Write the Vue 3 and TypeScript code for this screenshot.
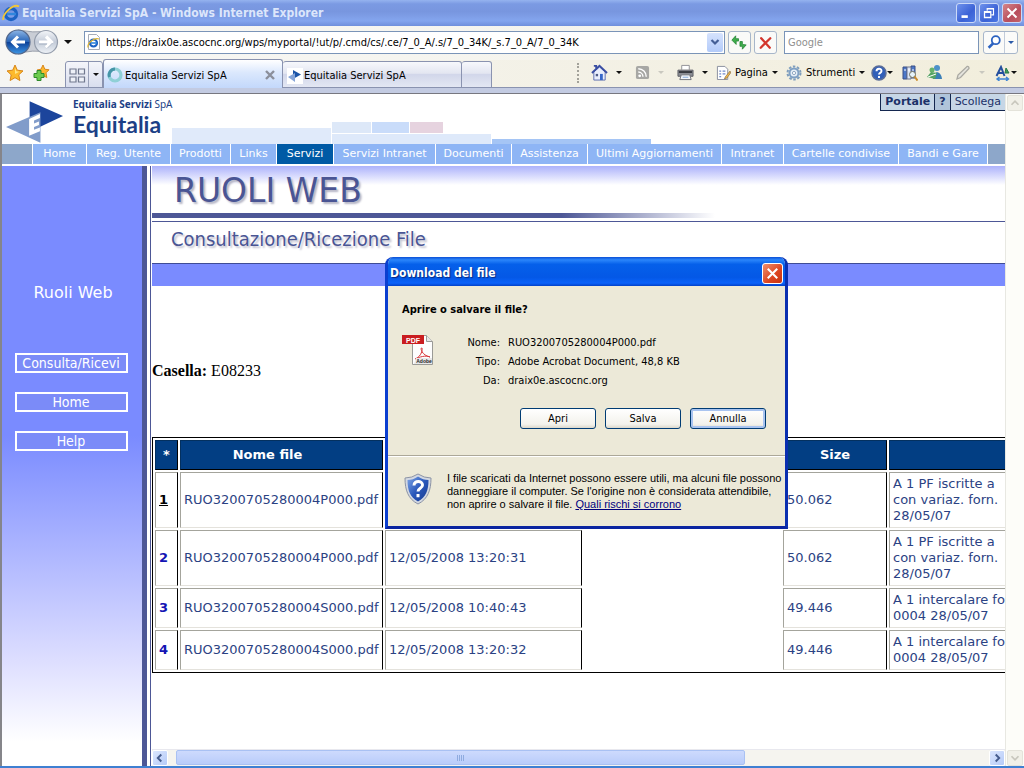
<script setup lang="ts">
import { ref } from 'vue'

interface NavItem { label: string; active?: boolean }
interface FileRow { name: string; date: string; size: string; note: string[] }

const address = ref('https://draix0e.ascocnc.org/wps/myportal/!ut/p/.cmd/cs/.ce/7_0_A/.s/7_0_34K/_s.7_0_A/7_0_34K')
const query = ref('')

const nav: NavItem[] = [
  { label: 'Home' },
  { label: 'Reg. Utente' },
  { label: 'Prodotti' },
  { label: 'Links' },
  { label: 'Servizi', active: true },
  { label: 'Servizi Intranet' },
  { label: 'Documenti' },
  { label: 'Assistenza' },
  { label: 'Ultimi Aggiornamenti' },
  { label: 'Intranet' },
  { label: 'Cartelle condivise' },
  { label: 'Bandi e Gare' },
]

const menu: string[] = ['Consulta/Ricevi', 'Home', 'Help']

const rows: FileRow[] = [
  { name: 'RUO3200705280004P000.pdf', date: '', size: '50.062', note: ['A 1 PF iscritte a', 'con variaz. forn.', '28/05/07'] },
  { name: 'RUO3200705280004P000.pdf', date: '12/05/2008 13:20:31', size: '50.062', note: ['A 1 PF iscritte a', 'con variaz. forn.', '28/05/07'] },
  { name: 'RUO3200705280004S000.pdf', date: '12/05/2008 10:40:43', size: '49.446', note: ['A 1 intercalare fo', '0004 28/05/07'] },
  { name: 'RUO3200705280004S000.pdf', date: '12/05/2008 13:20:32', size: '49.446', note: ['A 1 intercalare fo', '0004 28/05/07'] },
]
</script>

<template>
  <div class="window">
    <header class="titlebar">
      <svg class="i18" viewBox="0 0 18 18">
        <circle cx="9" cy="10" r="5.5" fill="none" stroke="#1c62c4" stroke-width="3.4" />
        <path d="M5 10h9" stroke="#2f86dd" stroke-width="2.4" />
        <path d="M1.500 16C-.5 11 11 -1 17 2.500" fill="none" stroke="#f0c63a" stroke-width="1.800" />
      </svg>
      <span class="caption">Equitalia Servizi SpA - Windows Internet Explorer</span>
      <div class="winbtns">
        <button class="wb" aria-label="Riduci a icona"><svg viewBox="0 0 20 20"><path d="M5 14h7" stroke="#fff" stroke-width="3" /></svg></button>
        <button class="wb" aria-label="Ripristina"><svg viewBox="0 0 20 20"><path d="M8 7.500V5h7v7h-2.500M8 5.500h7" fill="none" stroke="#fff" stroke-width="1.300" /><path d="M5 8.500h7V15H5zM5 9.300h7" fill="none" stroke="#fff" stroke-width="1.400" /></svg></button>
        <button class="wb close" aria-label="Chiudi"><svg viewBox="0 0 20 20"><path d="M5 5l10 10M15 5L5 15" stroke="#fff" stroke-width="2.200" /></svg></button>
      </div>
    </header>

    <div class="addressrow">
      <div class="navbtns">
        <svg class="plate" viewBox="0 0 56 28">
          <defs>
            <linearGradient id="bk" x1="0" y1="0" x2="0" y2="1"><stop offset="0" stop-color="#8db6e6" /><stop offset=".48" stop-color="#2a66b8" /><stop offset=".5" stop-color="#0c3f96" /><stop offset="1" stop-color="#3e97e6" /></linearGradient>
            <linearGradient id="fw" x1="0" y1="0" x2="0" y2="1"><stop offset="0" stop-color="#f4f6f9" /><stop offset=".5" stop-color="#c3cbd8" /><stop offset="1" stop-color="#eef2f7" /></linearGradient>
          </defs>
          <path d="M14 2Q29 5 43 3.500V24.500Q29 21 14 26Z" fill="#c9cdd5" stroke="#9aa0ac" />
          <circle cx="14" cy="14" r="12" fill="url(#bk)" stroke="#54688c" stroke-width="1.200" />
          <path d="M21 14H9M14 8.500L8.500 14L14 19.500" fill="none" stroke="#fff" stroke-width="3" />
          <circle cx="42" cy="14" r="11.500" fill="url(#fw)" stroke="#939cab" stroke-width="1.200" />
          <path d="M35 14h12M42 8.500L47.500 14L42 19.500" fill="none" stroke="#fff" stroke-width="3.200" />
          <path d="M35 16h8M43 20.500l5.500-5.500" fill="none" stroke="#98a4b8" stroke-width=".8" />
        </svg>
        <button class="ghost" aria-label="Indietro"></button>
        <button class="ghost" aria-label="Avanti"></button>
      </div>
      <button class="bare recent" aria-label="Pagine recenti"><i class="caret big"></i></button>
      <div class="addr">
        <svg class="i16" viewBox="0 0 16 16">
          <path d="M2.500.5h8l3 3v12h-11z" fill="#fff" stroke="#a6acb8" />
          <circle cx="7.500" cy="9" r="3.500" fill="none" stroke="#1c62c4" stroke-width="2.200" />
          <path d="M5 9h6" stroke="#2f86dd" stroke-width="1.600" /><path d="M2 13.500C1 9 9 3 13 5" fill="none" stroke="#e0b52f" stroke-width="1.200" />
        </svg>
        <input v-model="address" aria-label="Indirizzo" />
        <button class="combo" aria-label="Mostra indirizzi"><svg viewBox="0 0 16 18"><path d="M4.500 7l3.500 3.500L11.500 7" fill="none" stroke="#445f96" stroke-width="2.200" /></svg></button>
      </div>
      <button class="sq" aria-label="Aggiorna"><svg viewBox="0 0 22 22"><path d="M3 8.500L7 4v3h3v2.500H7.500V13z" fill="#3fae4b" stroke="#238235" stroke-width=".8" /><path d="M19 12.500L15 17v-3h-2.500v-5H15v3z" fill="#3fae4b" stroke="#238235" stroke-width=".8" transform="translate(-1 1)" /></svg></button>
      <button class="sq" aria-label="Interrompi"><svg viewBox="0 0 22 22"><path d="M6.500 6.500l9 10M16 6.500L6 16.500" stroke="#d3362d" stroke-width="2.400" stroke-linecap="round" /></svg></button>
      <input v-model="query" class="search" placeholder="Google" aria-label="Cerca" />
      <div class="searchbtns">
        <button class="bare" aria-label="Avvia ricerca"><svg class="i16" viewBox="0 0 18 18"><circle cx="11" cy="7" r="4.500" fill="#fff" stroke="#2b62c0" stroke-width="2" /><path d="M8 10.500L3 15.500" stroke="#2b62c0" stroke-width="3" /></svg></button>
        <button class="bare split" aria-label="Opzioni di ricerca"><i class="caret blue"></i></button>
      </div>
    </div>

    <div class="tabrow">
      <button class="bare star" aria-label="Preferiti"><svg class="i18" viewBox="0 0 18 18"><path d="M9 1l2.300 5.200 5.700.7-4.200 3.900 1.100 5.700L9 13.700 4.100 16.500l1.100-5.700L1 6.900l5.700-.7z" fill="#fdb92c" stroke="#d8861a" /><path d="M9 4l1.300 3.200 3 .5L9 10z" fill="#ffe68a" /></svg></button>
      <button class="bare star" aria-label="Aggiungi a preferiti"><svg class="i18" viewBox="0 0 18 18"><path d="M11 1l1.800 4.200 4.200.6-3 3 .8 4.700L11 11.500 7 13.500 7.800 9 5 6l4-.8z" fill="#fdb92c" stroke="#d8861a" /><path d="M5 6.500h4v3h3v4H9v3H5v-3H2v-4h3z" fill="#6ccb4e" stroke="#2f8a2c" /></svg></button>
      <div class="quick">
        <button class="bare" aria-label="Schede rapide"><svg class="i18" viewBox="0 0 18 18"><path d="M2 3h6v5H2zM10.500 3h6v5h-6zM2 11h6v5H2zM10.500 11h6v5h-6z" fill="#eef1f8" stroke="#70788e" stroke-width="1.200" /></svg></button>
        <button class="bare split" aria-label="Elenco schede"><i class="caret"></i></button>
      </div>
      <div class="tab current">
        <svg class="i16" viewBox="0 0 16 16"><circle cx="8" cy="8" r="6" fill="none" stroke="#8fd0d6" stroke-width="3.200" /><path d="M8 2a6 6 0 0 0-5.500 8" fill="none" stroke="#4595a8" stroke-width="3" /></svg>
        <a href="#">Equitalia Servizi SpA</a>
        <button class="bare tabclose" aria-label="Chiudi scheda"><svg class="i12" viewBox="0 0 12 12"><path d="M2 2l8 8M10 2l-8 8" stroke="#8b8f9b" stroke-width="2.400" /></svg></button>
      </div>
      <div class="tab">
        <svg class="i16" viewBox="0 0 16 16"><path fill="#fff" d="M0 0h16v16H0z" /><path d="M6 2l8 4.500L6 11z" fill="#1c55a8" /><path d="M1 9l7-4v9z" fill="#86a5d8" /></svg>
        <a href="#">Equitalia Servizi SpA</a>
      </div>
      <button class="newtab" aria-label="Nuova scheda"></button>
      <div class="commands">
        <span class="grip"></span>
        <button class="cmd wide" aria-label="Pagina iniziale"><svg class="i17" viewBox="0 0 18 18"><path d="M3 8.500V17h12V8.500L9 3z" fill="#e9eefc" stroke="#5a6cae" /><path d="M1 9.500L9 2l8 7.500M3 2h2.500v4" fill="none" stroke="#3a4ea3" stroke-width="2" /><path d="M9.500 10.500h3V17h-3z" fill="#3767c9" /><path d="M5 10.500h2.500V13H5z" fill="#4e5c88" /></svg><i class="caret"></i></button>
        <button class="cmd wide" aria-label="Feed"><svg class="i15" viewBox="0 0 16 16"><rect x="1" y="1" width="14" height="14" rx="2" fill="#a7a7a4" /><circle cx="5" cy="11.500" r="1.500" fill="#fff" /><path d="M3.500 7.500a5 5 0 0 1 5 5M3.500 4a8.500 8.500 0 0 1 8.500 8.500" fill="none" stroke="#fff" stroke-width="1.500" /></svg><i class="caret off"></i></button>
        <button class="cmd wide" aria-label="Stampa"><svg class="i17" viewBox="0 0 18 18"><path d="M5 6V1.500h8V6" fill="#fff" stroke="#8e8f94" /><path d="M1 6.500h16V13H1z" fill="#8a8c93" stroke="#5d5f66" /><path d="M2 8.500h14" stroke="#35373d" stroke-width="2" /><path d="M4.500 11.500h9l1.500 5H3z" fill="#f5f7fb" stroke="#6f7178" /><path d="M6 14h6" stroke="#80a6da" /></svg><i class="caret"></i></button>
        <button class="cmd"><svg class="i15" viewBox="0 0 16 16"><path d="M1.500 1.500h8l3 3v11h-11z" fill="#fff" stroke="#868c9c" /><path d="M3.500 6.500h2M3.500 9.500h2M3.500 12.500h2M7 6.500h3M7 9.500h3" stroke="#3f62b8" /><path d="M15 6.500l-5 6-1 2.500 2.500-1 4-5.500z" fill="#f5b94a" stroke="#8d7143" stroke-width=".8" /></svg>Pagina<i class="caret near"></i></button>
        <button class="cmd"><svg class="i16" viewBox="0 0 16 16"><circle cx="8" cy="8" r="6.500" fill="none" stroke="#7e9dbd" stroke-width="2" stroke-dasharray="2.500 1.600" /><circle cx="8" cy="8" r="4.500" fill="#e6eff8" stroke="#7fa0c4" stroke-width="2" /><circle cx="8" cy="8" r="1.600" fill="#fff" stroke="#7894b4" stroke-width=".8" /></svg>Strumenti<i class="caret near"></i></button>
        <button class="cmd tight" aria-label="Guida"><svg class="i16" viewBox="0 0 16 16"><circle cx="8" cy="8" r="7" fill="#315fb9" stroke="#5b6d97" stroke-width="1.500" /><path d="M5.500 6.300c0-3.300 5-3.300 5-.3 0 2-2.500 1.700-2.500 3.600M8 11v2" fill="none" stroke="#fff" stroke-width="1.900" /></svg><i class="caret"></i></button>
        <button class="cmd" aria-label="Ricerche"><svg class="i16" viewBox="0 0 16 16"><path d="M1 2h4v12H1zM9 1h4v12H9z" fill="#4c78c9" stroke="#3b4f84" /><path d="M5 2h4v12H5z" fill="#dce5f5" stroke="#69738f" /><path d="M2 5h2M6 5h2M10 5h2" stroke="#fff" /><circle cx="10.500" cy="9.500" r="3" fill="#e5f3fb" stroke="#77755e" /><path d="M12.500 11.500l3 4" stroke="#c98a2b" stroke-width="2" /></svg></button>
        <button class="cmd" aria-label="Messenger"><svg class="i17" viewBox="0 0 17 17"><circle cx="11" cy="4" r="3" fill="#4d91c9" /><path d="M7 15c0-9 8-9 9 0z" fill="#3b7fb7" /><circle cx="6" cy="6" r="2.500" fill="#66b26b" /><path d="M1 13l4-5 6 1-2 6z" fill="#55a463" /><path d="M2 13l8-3" stroke="#fff" /></svg></button>
        <button class="cmd wide" aria-label="Modifica"><svg class="i16" viewBox="0 0 16 16"><path d="M2 14l1-4L12 1.500q2-.5 2 2L5.500 12.500z" fill="#e4e3dc" stroke="#aaa9a2" stroke-width="1.300" /></svg><i class="caret off"></i></button>
        <button class="cmd tight" aria-label="Traduci"><svg class="i16" viewBox="0 0 16 16"><path d="M1.500 11L6 2l3.500 9M3.500 8h5" fill="none" stroke="#244f9e" stroke-width="2" /><path d="M11 3l3 5h-4z" fill="#3f9e5b" stroke="#28784a" /><path d="M2 14h11M4.500 12L2 14l2.500 2M11 12l2.500 2L11 16" fill="none" stroke="#3e84d4" stroke-width="1.400" /></svg><i class="caret"></i></button>
      </div>
    </div>

    <div class="viewport">
      <main class="page">
        <div class="masthead">
          <div class="brand">
            <svg class="logo" viewBox="0 0 60 46">
              <path d="M24 3v31L58 18z" fill="#1c459c" />
              <path d="M0 29L35 14V45z" fill="#819cca" />
              <path d="M23.500 21l11-5v4l-6 2.500v3l5-2V27l-5 2v3l6-2.500v4l-11 4.500z" fill="#fff" />
            </svg>
            <div class="names">
              <div class="small"><b>Equitalia Servizi</b> SpA</div>
              <div class="large">Equitalia</div>
            </div>
          </div>
          <div class="steps">
            <span class="s1"></span>
            <div class="s2"><div class="chips"><span></span><span></span><span></span></div><span class="base"></span></div>
            <span class="s3"></span>
          </div>
          <div class="portal">
            <a href="#"><b>Portale</b></a><a href="#" class="q"><b>?</b></a><a href="#">Scollega</a>
          </div>
        </div>
        <nav class="nav">
          <span class="end"></span>
          <a v-for="n in nav" :key="n.label" href="#" :class="{ active: n.active }">{{ n.label }}</a>
          <span class="end"></span>
        </nav>
        <div class="body">
          <aside class="side">
            <div class="sidetitle">Ruoli Web</div>
            <button v-for="m in menu" :key="m">{{ m }}</button>
          </aside>
          <section class="content">
            <h1>RUOLI WEB</h1>
            <div class="rule"></div>
            <h2>Consultazione/Ricezione File</h2>
            <div class="band"></div>
            <p class="casella"><b>Casella:</b> E08233</p>
            <table>
              <colgroup><col class="c1" /><col class="c2" /><col class="c3" /><col class="c4" /><col class="c5" /><col class="c6" /></colgroup>
              <thead>
                <tr><th>*</th><th class="file">Nome file</th><th></th><th></th><th>Size</th><th></th></tr>
              </thead>
              <tbody>
                <tr v-for="(r, i) in rows" :key="i">
                  <td class="num"><a href="#" :class="{ focused: i === 0 }">{{ i + 1 }}</a></td>
                  <td>{{ r.name }}</td>
                  <td>{{ r.date }}</td>
                  <td class="void"></td>
                  <td>{{ r.size }}</td>
                  <td><div v-for="l in r.note" :key="l">{{ l }}</div></td>
                </tr>
              </tbody>
            </table>
            <div class="hscroll">
              <button class="sb" aria-label="Scorri a sinistra"><svg viewBox="0 0 16 16"><path d="M9.500 4L5.500 8l4 4" fill="none" stroke="#465c8d" stroke-width="2.200" /></svg></button>
              <div class="track"><div class="thumb"><i></i><i></i><i></i><i></i></div></div>
              <button class="sb" aria-label="Scorri a destra"><svg viewBox="0 0 16 16"><path d="M6.500 4l4 4-4 4" fill="none" stroke="#465c8d" stroke-width="2.200" /></svg></button>
            </div>
          </section>
        </div>
      </main>
      <div class="vscroll">
        <button class="sb off" aria-label="Scorri in alto" disabled><svg viewBox="0 0 16 16"><path d="M4 10l4-4 4 4" fill="none" stroke="#c8c7bd" stroke-width="2" /></svg></button>
        <button class="sb off" aria-label="Scorri in basso" disabled><svg viewBox="0 0 16 16"><path d="M4 6l4 4 4-4" fill="none" stroke="#c8c7bd" stroke-width="2" /></svg></button>
      </div>
    </div>

    <div class="dialog" role="dialog" aria-labelledby="dlg">
      <div class="dtitle">
        <span id="dlg">Download del file</span>
        <button class="dx" aria-label="Chiudi finestra"><svg viewBox="0 0 20 20"><path d="M5 5l10 10M15 5L5 15" stroke="#fff" stroke-width="2.200" /></svg></button>
      </div>
      <div class="dmain">
        <b>Aprire o salvare il file?</b>
        <div class="info">
          <svg class="pdf" viewBox="0 0 32 32">
            <path d="M10.500 2.500h14l6 6V31.500h-20z" fill="#fdfdfd" stroke="#9a9a96" />
            <path d="M24.500 2.500v6h6" fill="#e6e6e6" stroke="#9a9a96" />
            <path d="M0 2h22v9H0z" fill="#c91d20" />
            <text x="11" y="9.500" text-anchor="middle" font-size="7" font-weight="bold" fill="#fff">PDF</text>
            <path d="M13 26c4-1 8-7 7-11-2-1-1 7 8 9-4-2-11 0-15 2z" fill="none" stroke="#d8373a" />
            <path d="M14 25h16v6H12z" fill="#e8e8e8" />
            <text x="22" y="30" text-anchor="middle" font-size="5" font-weight="bold" fill="#222">Adobe</text>
          </svg>
          <dl>
            <dt>Nome:</dt><dd>RUO3200705280004P000.pdf</dd>
            <dt>Tipo:</dt><dd>Adobe Acrobat Document, 48,8 KB</dd>
            <dt>Da:</dt><dd>draix0e.ascocnc.org</dd>
          </dl>
        </div>
        <div class="actions">
          <button>Apri</button><button>Salva</button><button class="default">Annulla</button>
        </div>
      </div>
      <div class="dfoot">
        <svg class="shield" viewBox="0 0 28 32">
          <defs><linearGradient id="sh" x1="0" y1="0" x2="1" y2="1"><stop offset="0" stop-color="#7fa6e6" /><stop offset=".5" stop-color="#2a58bb" /><stop offset="1" stop-color="#173a8e" /></linearGradient></defs>
          <path d="M14 1Q20 5 27 5C27 17 24 26 14 31C4 26 1 17 1 5Q8 5 14 1z" fill="#d3d8e2" stroke="#8b93a5" />
          <path d="M14 3.500Q19 7 24.500 7C24.500 17 22 24.500 14 28.500C6 24.500 3.500 17 3.500 7Q9 7 14 3.500z" fill="url(#sh)" />
          <path d="M10 12.500c0-5.500 8.500-5 8.500-.5 0 3.500-4.500 3-4.500 6.500M14 21v3.200" fill="none" stroke="#fff" stroke-width="3" />
        </svg>
        <div class="warn">
          <div>I file scaricati da Internet possono essere utili, ma alcuni file possono</div>
          <div>danneggiare il computer. Se l'origine non è considerata attendibile,</div>
          <div><span>non aprire o salvare il file. </span><a href="#">Quali rischi si corrono</a></div>
        </div>
      </div>
    </div>
  </div>
</template>

<style>
body { margin: 0; }
</style>

<style scoped>
* { box-sizing: border-box; }
button, input { font: inherit; color: inherit; margin: 0; padding: 0; }
a { color: inherit; text-decoration: none; }
svg { display: block; flex: none; }
.window {
  position: relative; display: flex; flex-direction: column; height: 100vh; min-height: 690px; overflow: hidden;
  font: 11px/13px "DejaVu Sans Condensed", "Noto Sans", sans-serif; color: #000; background: #f2efe2;
  border-bottom: 2px solid #3f80d2;
}
.i12 { width: 12px; height: 12px; } .i15 { width: 15px; height: 15px; } .i16 { width: 16px; height: 16px; }
.i17 { width: 17px; height: 17px; } .i18 { width: 18px; height: 18px; }
.caret { width: 0; height: 0; border: 3px solid transparent; border-top-color: #111; border-bottom: 0; flex: none; }
.caret.big { border-width: 4px; border-bottom: 0; }
.caret.blue { border-top-color: #2b5aa8; }
.caret.off { border-top-color: #c9c8bf; }
.bare { border: 0; background: none; display: flex; align-items: center; justify-content: center; }

.titlebar {
  height: 26px; flex: none; display: flex; align-items: center; gap: 2px; padding: 0 2px;
  background: linear-gradient(#95b3ef, #7b9ae3 15%, #7896df 45%, #84a5ee 80%, #6f8fdc);
  color: #dce6fb; font-weight: bold;
}
.caption { flex: 1; white-space: nowrap; font-size: 12px; }
.winbtns { display: flex; gap: 3px; }
.wb { width: 20px; height: 20px; border: 1px solid #cbd9f8; border-radius: 3px; background: linear-gradient(135deg, #6f92ec, #3b62d6 60%, #4c78e4); }
.wb.close { background: linear-gradient(135deg, #d6868a, #b84d5c 60%, #c4656a); }

.addressrow { height: 34px; flex: none; display: flex; align-items: center; padding: 0 6px 2px 4px; background: linear-gradient(90deg, #f7f7f5, #f4f2e8); }
.navbtns { position: relative; display: flex; width: 56px; height: 28px; }
.plate { position: absolute; inset: 0; }
.ghost { position: relative; flex: 1; border: 0; background: none; border-radius: 14px; }
.recent { width: 24px; height: 22px; padding-right: 8px; }
.addr { flex: 1; height: 23px; display: flex; align-items: center; gap: 4px; padding: 1px; border: 1px solid #7a94b8; background: #fff; }
.addr input { flex: 1; min-width: 0; border: 0; outline: 0; background: none; }
.combo { width: 16px; height: 19px; border: 0; border-radius: 2px; background: linear-gradient(#d5e2fd, #b3cbfa); }
.sq { width: 23px; height: 23px; margin-left: 3px; border: 1px solid #a7b6ca; border-radius: 3px; background: #fafaf8; }
.search { width: 195px; height: 23px; margin: 0 4px 0 7px; padding: 0 3px; border: 1px solid #7a94b8; background: #fff; outline: 0; }
.search::placeholder { color: #8f8f8f; opacity: 1; }
.searchbtns { width: 35px; height: 23px; display: flex; border: 1px solid #a7b6ca; border-radius: 3px; background: #fbfbf9; }
.searchbtns .bare:first-child { flex: 1; }
.searchbtns .split { width: 13px; border-left: 1px solid #c2ccda; }

.tabrow { height: 34px; flex: none; display: flex; align-items: flex-end; padding: 0 6px 5px 2px; background: linear-gradient(90deg, #f5f5f3, #f2eedc); border-bottom: 1px solid #777780; box-shadow: inset 0 -5px #c3cbe2, inset 0 -6px #8a93b0; }
.star { width: 26px; height: 30px; }
.quick { display: flex; width: 38px; height: 27px; margin-left: 11px; border: 1px solid #8a93b0; border-radius: 3px 3px 0 0; background: linear-gradient(#f4f5fa, #d9deee); }
.quick .bare:first-child { flex: 1; }
.quick .split { width: 14px; border-left: 1px solid #9aa2ba; }
.tab { display: flex; align-items: center; gap: 1px; width: 179px; height: 27px; padding: 2px 4px 0; border: 1px solid #8a93b0; border-left: 0; border-radius: 3px 3px 0 0; background: linear-gradient(#f7f8fc, #e3e6f1 45%, #d2d7ea 50%, #e3e7f3); white-space: nowrap; }
.tab a { flex: 1; }
.current { width: 180px; height: 29px; padding-left: 3px; padding-right: 6px; gap: 2px; border-left: 1px solid #8a93b0; border-bottom: 0; background: linear-gradient(#fff, #dbe8fd 45%, #c3d8fb); }
.newtab { width: 30px; height: 27px; border: 1px solid #8a93b0; border-left: 0; border-radius: 3px 3px 0 0; background: linear-gradient(#f7f8fc, #e3e6f1 45%, #d2d7ea 50%, #e3e7f3); }
.commands { margin-left: auto; height: 31px; display: grid; align-items: center; grid-template-columns: 14px 44px 42px 39px 70px 85px 31px 24px 29px 40px 23px; }
.grip { height: 20px; border-left: 2px dotted #a3a29a; }
.cmd { display: flex; align-items: center; gap: 4px; border: 0; background: none; white-space: nowrap; height: 24px; }
.cmd.wide { gap: 8px; }
.cmd.tight { gap: 0; }

.viewport { flex: 1; min-height: 0; display: flex; background: #fff; border-left: 2px solid #85858a; }
.page { flex: 1; min-width: 0; display: flex; flex-direction: column; }
.masthead { position: relative; height: 50px; flex: none; display: flex; }
.brand { display: flex; width: 170px; padding: 4px 0 0 4px; gap: 8px; color: #1c3f86; white-space: nowrap; flex: none; }
.logo { width: 59px; height: 46px; }
.small { font: 10px/12px "Noto Sans", sans-serif; }
.large { font: bold 23px/28px Lato, "Noto Sans", sans-serif; }
.steps { display: flex; align-items: flex-end; }
.s1 { width: 159px; height: 16px; background: #e0eafa; }
.s2 { width: 159px; margin-left: 1px; }
.chips { display: flex; gap: 1px; margin-bottom: 1px; }
.chips span { width: 39px; height: 11px; background: #dde8f8; }
.chips span:nth-child(2) { width: 37px; background: #c9dcfa; }
.chips span:nth-child(3) { width: 33px; background: #e6d3df; }
.base { display: block; height: 10px; background: #dee9fa; }
.s3 { width: 159px; height: 5px; margin-left: 1px; background: #a5c5f5; }
.portal { position: absolute; top: 0; right: 0; display: flex; font: 11px/16px "DejaVu Sans", sans-serif; color: #1b3068; }
.portal a { background: #c6d6e6; border-left: 1px solid #14274f; border-bottom: 1px solid #14274f; padding: 0 4px; }
.portal .q { background: #b0c4da; }
.nav { height: 20px; flex: none; display: grid; gap: 1px; grid-template-columns: 30fr 53fr 83fr 59fr 45fr 56fr 101fr 75fr 75fr 133fr 61fr 114fr 88fr 17fr; font: 11px/20px "DejaVu Sans", sans-serif; color: #fff; text-align: center; }
.nav > * { background: #8eb5f5; min-width: 0; white-space: nowrap; }
.nav .end { background: #8da7ca; }
.nav .active { background: #005aa5; }
.body { flex: 1; min-height: 0; display: flex; margin-top: 2px; }
.side { width: 145px; flex: none; display: flex; flex-direction: column; align-items: center; padding: 117px 2px 0 0; border-right: 5px solid #4d5796; background: linear-gradient(#7a8bff 45%, #dcddff 82%, #fff 96%); color: #fff; }
.sidetitle { font: 16px/20px "DejaVu Sans", sans-serif; margin-bottom: 50px; padding-left: 4px; }
.side button { width: 113px; height: 20px; margin-bottom: 19px; border: 2px solid #fff; background: #7b8bf8; font-size: 14px; line-height: 15px; }
.content { flex: 1; min-width: 0; display: flex; flex-direction: column; overflow: hidden; margin-left: 3px; border-left: 1px solid #4d5796; padding-left: 1px; }
h1, h2 { margin: 0; font-weight: normal; white-space: nowrap; color: #4a5594; }
h1 { height: 47px; flex: none; padding-left: 22px; font: 33px/49px "DejaVu Sans", sans-serif; text-shadow: 2px 2px 2px #b4b4c4; background: linear-gradient(#acb2fb, #fff 19px); }
.rule { height: 9px; flex: none; border-bottom: 1px solid #4d5796; background: linear-gradient(90deg, #4d5796 48%, #fff 66%) 0 0 / 100% 5px no-repeat; }
h2 { height: 41px; flex: none; padding-left: 19px; font-size: 20px; line-height: 35px; text-shadow: 2px 2px 2px #c2c2d0; }
.band { height: 23px; flex: none; background: #7a8bff; border-top: 1px solid #3f4c96; }
.casella { margin: 75px 0 56px; font: 16px/20px "Liberation Serif", serif; }
table { width: 1050px; flex: none; table-layout: fixed; border-collapse: separate; border-spacing: 2px; border: 1px solid #000; font: 13px/16px "DejaVu Sans", sans-serif; color: #2b4283; }
.c1 { width: 23px; } .c2 { width: 203px; } .c3 { width: 197px; } .c4 { width: 197px; } .c5 { width: 104px; }
th { height: 30px; padding: 0; background: #023e83; border: 1px solid #03305f; border-right-color: #000; border-bottom-color: #000; color: #fff; }
th.file { padding-right: 28px; }
td { height: 40px; padding: 3px; border: 1px solid #a4a49c; border-right-color: #000; border-bottom-color: #e4e2dc; white-space: nowrap; }
td.void { border: 0; }
.num { font-weight: bold; color: #1414b4; }
.focused { color: #000; text-decoration: underline; }
.hscroll { margin-top: auto; height: 17px; flex: none; display: flex; background: #f5f4ef; border-top: 1px solid #e8e8ee; }
.sb { width: 16px; height: 16px; border: 1px solid #fff; border-radius: 2px; background: linear-gradient(135deg, #dbe6fe, #b6cbf8); flex: none; }
.sb.off { background: #f1f0e8; border-color: #e4e3da; }
.track { flex: 1; display: flex; padding-left: 8px; }
.thumb { width: 70%; height: 15px; display: flex; justify-content: center; align-items: center; gap: 1px; border: 1px solid #a9c1f3; border-radius: 2px; background: linear-gradient(#cddafd, #b9ccfa); }
.thumb i { width: 1px; height: 6px; background: #8fabdf; }
.vscroll { width: 19px; flex: none; display: flex; flex-direction: column; justify-content: space-between; padding: 1px 0 0 1px; border-left: 1px solid #e8e8e2; background: #fdfdf9; }

.dialog { position: absolute; left: 385px; top: 257px; width: 403px; border: 3px solid #0b3fd0; border-top: 0; border-right-color: #0a2fb0; border-bottom-color: #0a24a0; border-radius: 8px 8px 0 0; background: #ece9d8; overflow: hidden; }
.dtitle { height: 29px; display: flex; align-items: center; justify-content: space-between; padding: 3px 2px 0 2px; background: linear-gradient(#0b4fd6, #2b86fb 10%, #0560ea 25%, #0458e6 70%, #0a62fa 90%, #0241c8); color: #fff; font-weight: bold; font-size: 12px; text-shadow: 1px 1px 1px #0a2a80; }
.dx { width: 21px; height: 21px; border: 1px solid #fff; border-radius: 3px; background: linear-gradient(135deg, #f0906e, #dc4420 60%, #c83410); }
.dmain { padding: 17px 19px 26px 14px; border-bottom: 1px solid #aca899; box-shadow: 0 1px #fff; }
.dmain > b { display: block; }
.info { display: flex; margin-top: 17px; }
.pdf { width: 32px; height: 32px; font-family: "Liberation Sans", sans-serif; }
dl { margin: 0; flex: 1; display: grid; grid-template-columns: 66px 1fr; column-gap: 8px; line-height: 19px; }
dt { text-align: right; } dd { margin: 0; white-space: nowrap; }
.actions { display: flex; justify-content: flex-end; gap: 9px; margin-top: 18px; }
.actions button { width: 76px; height: 21px; border: 1px solid #003c74; border-radius: 3px; background: linear-gradient(#fff, #f3f2ec 80%, #dcd8cb); }
.actions .default { box-shadow: inset 0 0 0 2px #a9c4f0; }
.dfoot { display: flex; gap: 15px; align-items: flex-start; padding: 16px 8px 15px 16px; }
.shield { width: 28px; height: 32px; margin-top: 1px; }
.warn { flex: 1; min-width: 0; font: 11px/13px "Liberation Sans", sans-serif; white-space: nowrap; }
.warn a { color: #00007c; text-decoration: underline; }
</style>
